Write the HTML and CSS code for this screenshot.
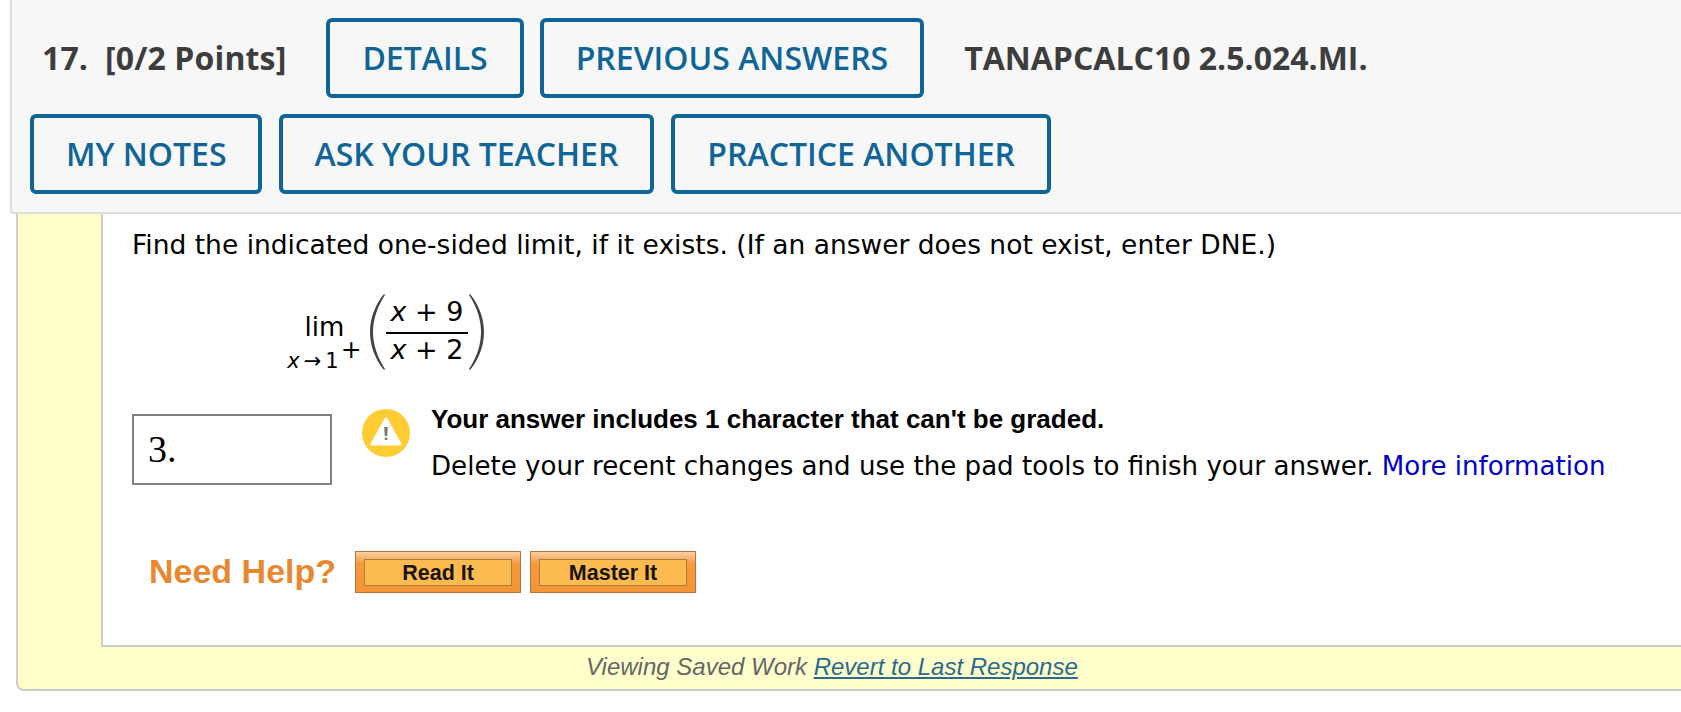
FILE: index.html
```html
<!DOCTYPE html>
<html lang="en">
<head>
    <meta charset="UTF-8">
    <meta name="viewport" content="width=device-width, initial-scale=1.0">
    <title>Question 17</title>
    <link rel="stylesheet" href="styles.css">
</head>
<body>

<div class="question-header">
    <div class="header-row">
        <span class="question-title">17.&nbsp; [0/2 Points]</span>
        <a class="action-btn">DETAILS</a>
        <a class="action-btn">PREVIOUS ANSWERS</a>
        <span class="question-code">TANAPCALC10 2.5.024.MI.</span>
    </div>
    <div class="header-row header-row-second">
        <a class="action-btn">MY NOTES</a>
        <a class="action-btn">ASK YOUR TEACHER</a>
        <a class="action-btn">PRACTICE ANOTHER</a>
    </div>
</div>

<div class="saved-panel">
    <div class="question-body">
        <p class="prompt">Find the indicated one-sided limit, if it exists. (If an answer does not exist, enter DNE.)</p>

        <div class="limit">
            <div class="limit-op">
                <span class="lim">lim</span>
                <span class="lim-under"><i>x</i><span class="arrow">→</span>1<span class="plus">+</span></span>
            </div>
            <svg class="paren" width="16" height="76" viewBox="0 0 16 76">
                <path d="M14 0 C4 12 0 26 0 38 C0 50 4 64 14 76 L15 75 C7 63 3 50 3 38 C3 26 7 13 15 1 Z" fill="#444"/>
            </svg>
            <div class="fraction">
                <span class="num"><i>x</i> + 9</span>
                <span class="den"><i>x</i> + 2</span>
            </div>
            <svg class="paren" width="16" height="76" viewBox="0 0 16 76">
                <path d="M2 0 C12 12 16 26 16 38 C16 50 12 64 2 76 L1 75 C9 63 13 50 13 38 C13 26 9 13 1 1 Z" fill="#444"/>
            </svg>
        </div>

        <div class="answer-row">
            <div class="answer-box">3.</div>
            <svg class="warn-icon" width="48" height="48" viewBox="0 0 48 48">
                <circle cx="24" cy="24" r="24" fill="#ffcc33"/>
                <path d="M24 10 L38 35 H10 Z" fill="#fff" stroke="#fff" stroke-width="3" stroke-linejoin="round"/>
                <path d="M22.2 18 H25.8 L25.2 27 H22.8 Z M22.8 28.5 H25.2 V31 H22.8 Z" fill="#777"/>
            </svg>
            <div class="warn-text">
                <div class="warn-title">Your answer includes 1 character that can't be graded.</div>
                <div class="warn-detail">Delete your recent changes and use the pad tools to finish your answer. <a class="more-link">More information</a></div>
            </div>
        </div>

        <div class="help-row">
            <span class="need-help">Need Help?</span>
            <a class="help-btn"><span>Read It</span></a>
            <a class="help-btn"><span>Master It</span></a>
        </div>
    </div>
    <div class="saved-footer">Viewing Saved Work <a class="revert-link">Revert to Last Response</a></div>
</div>

</body>
</html>
```

FILE: styles.css
```css
html, body {
    margin: 0;
    padding: 0;
    background: #fff;
    overflow: hidden;
}

/* top bar */
.question-header {
    margin-left: 10px;
    height: 194px;
    padding: 18px 0 0 18px;
    background: #f7f7f7;
    border-left: 2px solid #ddd;
    border-bottom: 2px solid #ddd;
    border-radius: 0 0 0 4px;
    font-family: "Open Sans", sans-serif;
}
.header-row {
    display: flex;
    align-items: center;
    gap: 16px;
    margin-bottom: 16px;
}
.header-row-second .action-btn:first-child {
    padding-right: 31px;
}
.header-row-second .action-btn + .action-btn {
    margin-left: 1px;
}
.question-title, .question-code {
    padding-bottom: 2px;
    font-size: 32px;
    font-weight: 700;
    color: #3d3d3d;
    white-space: nowrap;
}
.question-title {
    margin-left: 12px;
    margin-right: 24px;
    letter-spacing: 0.13px;
}
.question-code {
    margin-left: 24px;
}
.action-btn {
    display: block;
    height: 72px;
    line-height: 72px;
    padding: 0 32px;
    border: 4px solid #0f6595;
    border-radius: 6px;
    font-size: 32px;
    font-weight: 600;
    color: #0f6595;
    white-space: nowrap;
}

/* yellow frame */
.saved-panel {
    margin-left: 16px;
    padding-left: 83px;
    background: #ffffcc;
    border-left: 2px solid #ccc;
    border-bottom: 2px solid #ccc;
    border-radius: 0 0 0 8px;
}
.question-body {
    height: 431px;
    background: #fff;
    border-left: 2px solid #ccc;
    border-bottom: 2px solid #ccc;
    padding-left: 29px;
    font-family: "DejaVu Sans", sans-serif;
    font-size: 26.1px;
    color: #000;
}
.prompt {
    margin: 0;
    padding-top: 13px;
    font-size: 26.5px;
    line-height: 36px;
    white-space: nowrap;
}

/* limit expression */
.limit {
    display: flex;
    align-items: center;
    margin: 31px 0 0 147px;
    height: 76px;
}
.limit-op {
    display: flex;
    flex-direction: column;
    align-items: center;
    width: 91px;
    padding-top: 21px;
}
.lim {
    font-size: 26px;
    line-height: 30px;
}
.lim-under {
    margin-top: 7px;
    font-size: 21px;
    line-height: 24px;
    white-space: nowrap;
}
.arrow {
    margin: 0 4px;
}
.plus {
    margin-left: 2px;
    font-size: 25px;
    line-height: 0;
    vertical-align: 10px;
}
.fraction {
    display: flex;
    flex-direction: column;
    width: 82px;
    text-align: center;
    font-size: 27px;
}
.num, .den {
    white-space: nowrap;
}
.num {
    line-height: 36px;
    padding-bottom: 2px;
    border-bottom: 2px solid #000;
}
.den {
    line-height: 32px;
    padding-bottom: 4px;
}

/* answer + warning */
.answer-row {
    display: flex;
    margin-top: 39px;
}
.answer-box {
    box-sizing: border-box;
    width: 200px;
    height: 71px;
    margin-top: 5px;
    padding-left: 14px;
    border: 2px solid #808080;
    font-family: "Liberation Serif", serif;
    font-size: 38px;
    line-height: 67px;
}
.warn-icon {
    margin: 0 21px 0 30px;
    flex: none;
}
.warn-text {
    margin-top: -7px;
    white-space: nowrap;
}
.warn-title {
    font-family: "Liberation Sans", sans-serif;
    font-weight: 700;
    font-size: 26px;
    line-height: 34px;
}
.warn-detail {
    margin-top: 13px;
    line-height: 34px;
}
.more-link {
    color: #0000c8;
}

/* need help */
.help-row {
    display: flex;
    align-items: center;
    margin: 66px 0 0 17px;
}
.need-help {
    padding-bottom: 2px;
    font-family: "Liberation Sans", sans-serif;
    font-size: 34px;
    font-weight: 700;
    color: #e8892f;
    margin-right: 19px;
}
.help-btn {
    box-sizing: border-box;
    display: block;
    width: 166px;
    height: 42px;
    margin-right: 9px;
    padding: 7px 8px 6px;
    border: 1px solid #b5763a;
    background: linear-gradient(#f8cfa6, #f6993c 30%, #f49436);
}
.help-btn span {
    box-sizing: border-box;
    display: block;
    height: 100%;
    border: 1px solid #a8803f;
    background: #fbbb50;
    font-family: "Liberation Sans", sans-serif;
    font-size: 21.5px;
    font-weight: 700;
    line-height: 26px;
    text-align: center;
    color: #1a1206;
}

/* bottom strip */
.saved-footer {
    height: 42px;
    padding-left: 485px;
    line-height: 40px;
    font-family: "Liberation Sans", sans-serif;
    font-size: 24px;
    font-style: italic;
    color: #666;
    white-space: nowrap;
}
.revert-link {
    color: #2b6a90;
    text-decoration: underline;
}
```
